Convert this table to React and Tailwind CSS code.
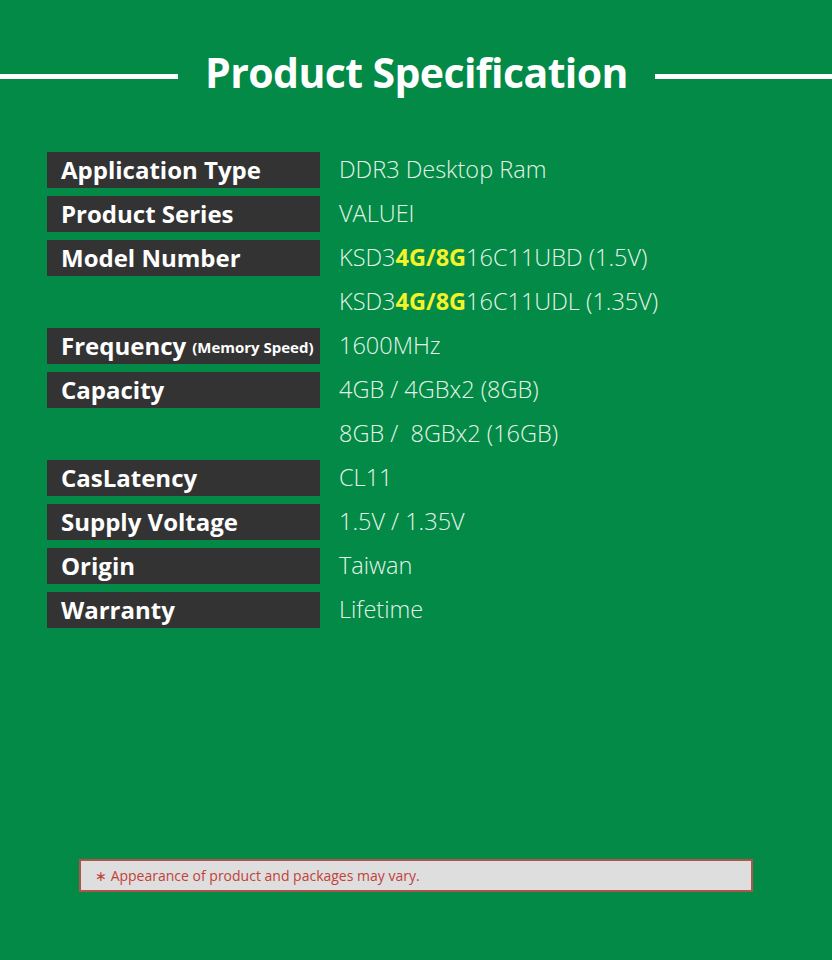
export default function App() {
  const rows = [
    { label: "Application Type", values: ["DDR3 Desktop Ram"] },
    { label: "Product Series", values: ["VALUEI"] },
    { label: "Model Number", values: ["m1", "m2"] },
    { label: "Frequency", small: "(Memory Speed)", values: ["1600MHz"] },
    { label: "Capacity", values: ["4GB / 4GBx2 (8GB)", "8GB /  8GBx2 (16GB)"] },
    { label: "CasLatency", values: ["CL11"] },
    { label: "Supply Voltage", values: ["1.5V / 1.35V"] },
    { label: "Origin", values: ["Taiwan"] },
    { label: "Warranty", values: ["Lifetime"] },
  ];
  const renderValue = (v) => {
    if (v === "m1")
      return (
        <>
          KSD3<span className="font-bold text-[#f5f22a]">4G/8G</span>16C11UBD (1.5V)
        </>
      );
    if (v === "m2")
      return (
        <>
          KSD3<span className="font-bold text-[#f5f22a]">4G/8G</span>16C11UDL (1.35V)
        </>
      );
    return v;
  };
  return (
    <div
      className="w-[832px] h-[960px] bg-[#028a46] flex flex-col"
      style={{ fontFamily: '"Open Sans", "Noto Sans", sans-serif' }}
    >
      <div className="flex items-center mt-[48px] h-[56px]">
        <div className="w-[178px] h-[5px] bg-white" />
        <h1 className="flex-1 text-center text-white font-bold text-[41px] leading-none tracking-[-0.6px] pb-[8px]">
          Product Specification
        </h1>
        <div className="w-[177px] h-[5px] bg-white" />
      </div>
      <div className="flex flex-col mt-[44px] ml-[47px]">
        {rows.map((r) =>
          r.values.map((v, i) => (
            <div key={r.label + i} className="flex items-center h-[44px]">
              <div className="w-[273px] h-[36px] flex items-center">
                {i === 0 && (
                  <div className="w-full h-full bg-[#333333] flex items-center pl-[14px] pb-[1px] text-white font-bold text-[24px] leading-none whitespace-nowrap">
                    {r.label}
                    {r.small && (
                      <span className="ml-[6px] text-[15px] font-bold mt-[4px]">{r.small}</span>
                    )}
                  </div>
                )}
              </div>
              <div className="ml-[19px] text-[23.5px] font-light text-[#e6f4ea] leading-none whitespace-pre">
                {renderValue(v)}
              </div>
            </div>
          ))
        )}
      </div>
      <div className="mt-auto mb-[68px] mx-[79px] h-[33px] bg-[#dedede] border-2 border-[#b0534c] flex items-center pl-[14px] text-[14px] text-[#c2413a]">
        ∗ Appearance of product and packages may vary.
      </div>
    </div>
  );
}
